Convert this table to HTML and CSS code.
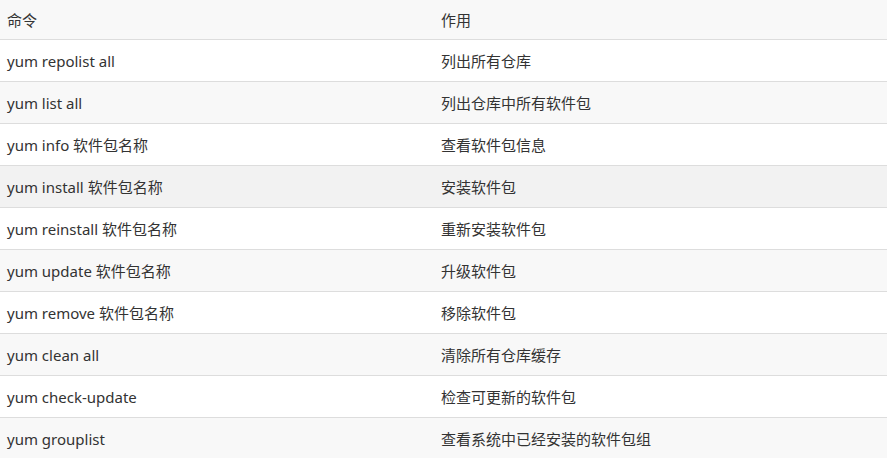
FILE: index.html
```html
<!DOCTYPE html>
<html lang="zh">
<head>
<meta charset="utf-8">
<link rel="stylesheet" href="styles.css">
</head>
<body>
<table class="cmd-table">
  <thead>
    <tr><th>命令</th><th>作用</th></tr>
  </thead>
  <tbody>
    <tr><td>yum repolist all</td><td>列出所有仓库</td></tr>
    <tr><td>yum list all</td><td>列出仓库中所有软件包</td></tr>
    <tr><td>yum info 软件包名称</td><td>查看软件包信息</td></tr>
    <tr class="hover"><td>yum install 软件包名称</td><td>安装软件包</td></tr>
    <tr><td>yum reinstall 软件包名称</td><td>重新安装软件包</td></tr>
    <tr><td>yum update 软件包名称</td><td>升级软件包</td></tr>
    <tr><td>yum remove 软件包名称</td><td>移除软件包</td></tr>
    <tr><td>yum clean all</td><td>清除所有仓库缓存</td></tr>
    <tr><td>yum check-update</td><td>检查可更新的软件包</td></tr>
    <tr><td>yum grouplist</td><td>查看系统中已经安装的软件包组</td></tr>
  </tbody>
</table>
</body>
</html>
```
FILE: styles.css
```css
html, body {
  margin: 0;
  padding: 0;
  background: #ffffff;
}
body {
  font-family: "Noto Sans", "Noto Sans CJK SC", sans-serif;
  font-size: 15px;
  color: #333333;
}
.cmd-table {
  width: 887px;
  border-collapse: collapse;
  table-layout: fixed;
}
.cmd-table th,
.cmd-table td {
  height: 42px;
  padding: 1px 7px 0;
  text-align: left;
  font-weight: normal;
  vertical-align: middle;
  border-bottom: 1px solid #dddddd;
  box-sizing: border-box;
}
.cmd-table th {
  height: 39px;
}
.cmd-table th:first-child,
.cmd-table td:first-child {
  width: 434px;
}
.cmd-table thead tr {
  background: #f8f8f8;
}
.cmd-table tbody tr:nth-child(even) {
  background: #f8f8f8;
}
.cmd-table tbody tr.hover {
  background: #f2f2f2;
}
```
